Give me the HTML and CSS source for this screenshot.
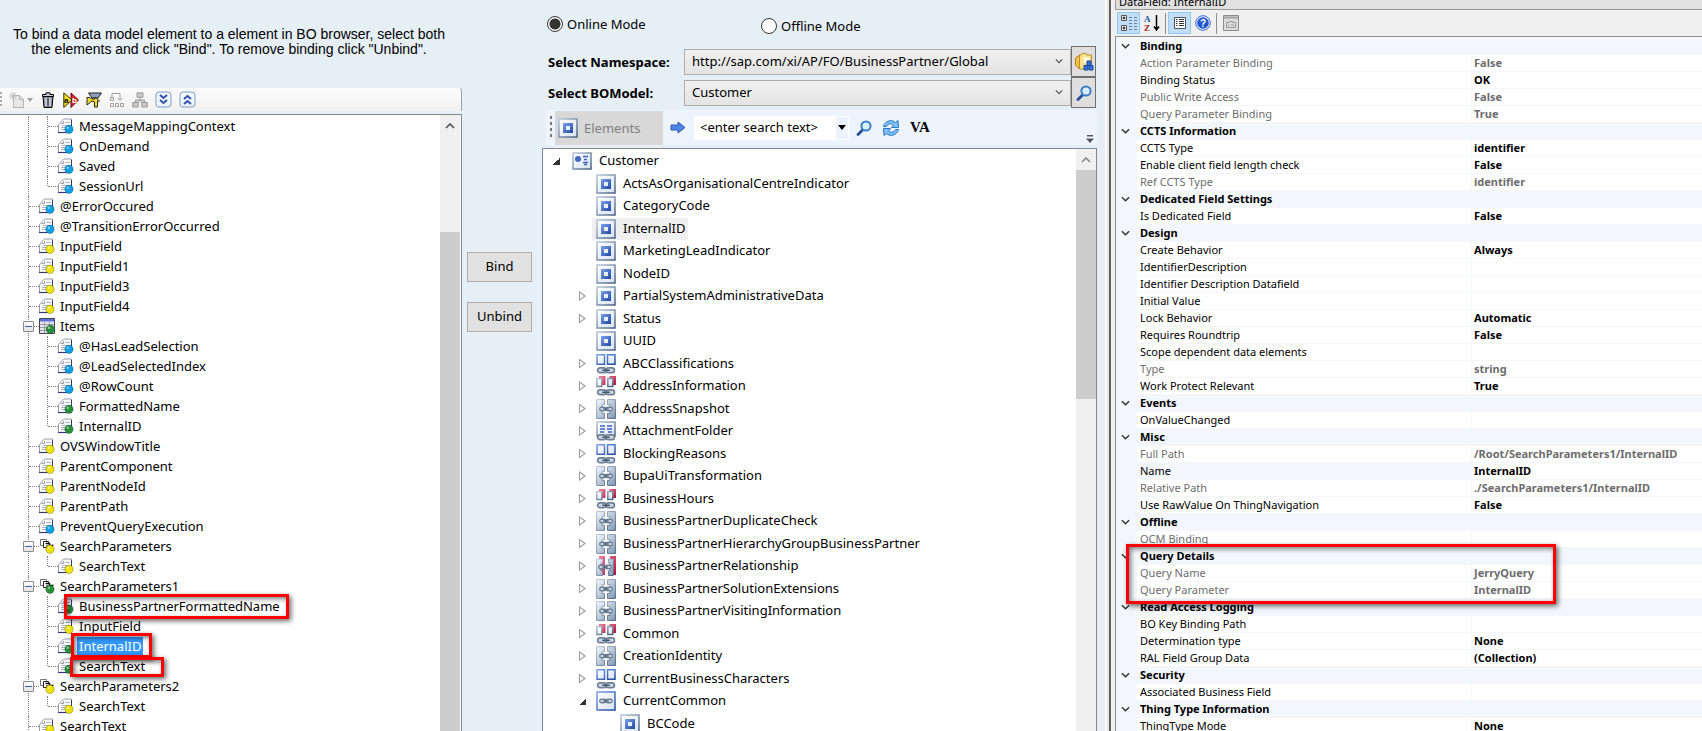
FILE: index.html
```html
<!DOCTYPE html>
<html lang="en">
<head>
<meta charset="utf-8">
<title>Data Binding</title>
<link rel="stylesheet" href="styles.css">
</head>
<body>
<svg class="defs" aria-hidden="true">
  <defs>
    <linearGradient id="g-steel" x1="0" y1="0" x2="1" y2="1"><stop offset="0" stop-color="#b9c8da"/><stop offset="1" stop-color="#47607f"/></linearGradient>
    <linearGradient id="g-paper" x1="0" y1="0" x2="1" y2="1"><stop offset="0" stop-color="#fff"/><stop offset="1" stop-color="#d6e2f2"/></linearGradient>
    <linearGradient id="g-metal" x1="0" y1="0" x2="1" y2="1"><stop offset="0" stop-color="#f4f8fc"/><stop offset="1" stop-color="#8299b5"/></linearGradient>
    <linearGradient id="g-blue" x1="0" y1="0" x2="1" y2="1"><stop offset="0" stop-color="#7aa2ec"/><stop offset="1" stop-color="#2147a0"/></linearGradient>
    <linearGradient id="g-red" x1="0" y1="0" x2="1" y2="1"><stop offset="0" stop-color="#f47a94"/><stop offset="1" stop-color="#b01238"/></linearGradient>
    <symbol id="doc" viewBox="0 0 16 16">
      <path d="M1.500 13V4.500L4.500 1.500H13.500V12H13" fill="#fff"/>
      <path d="M1 5v9h8V5z" fill="#fff"/>
      <path d="M.5 14V6.500L3 4.500V3.500L5.500 1H13.500" fill="none" stroke="#9a9ca6"/>
      <path d="M3 5.500h2.500V3" fill="none" stroke="#9a9ca6"/>
      <path d="M13.500 1.500v8" stroke="#343a78"/>
      <path d="M0 14.500h9" stroke="#343a78" stroke-width="1.200"/>
      <path d="M7 4.500h5M4 7.500h7M3 9.500h5M3 11.500h4" stroke="#a9b2c6"/>
      <circle cx="11" cy="11.300" r="4.200" fill="currentColor" stroke="#000" stroke-opacity=".3" stroke-width=".8"/>
      <circle cx="9.800" cy="9.800" r="1.200" fill="#fff" fill-opacity=".5"/>
    </symbol>
    <symbol id="struct" viewBox="0 0 16 16">
      <path d="M1.500 1.500h6v6h-6z" fill="#fff" stroke="#777"/>
      <path d="M4.500 3.500h5v6h-5z" fill="#fff" stroke="#222"/>
      <path d="M6.500 5.500h4v2h3l-3 4-3-4" fill="#fff" stroke="#111" stroke-width="1.500"/>
      <circle cx="11" cy="11.300" r="4.200" fill="currentColor" stroke="#000" stroke-opacity=".3" stroke-width=".8"/>
      <circle cx="9.800" cy="9.800" r="1.200" fill="#fff" fill-opacity=".5"/>
    </symbol>
    <symbol id="table" viewBox="0 0 16 16">
      <path d="M.5.5h15v15H.5z" fill="#e4e4ea" stroke="#44464f"/>
      <path d="M1 1h14v2.500H1z" fill="#5a72d6"/>
      <path d="M1 6.500h14M1 9.500h14M1 12.500h14M5.500 4v11M10.500 4v11" stroke="#9b9ba5"/>
      <circle cx="11.300" cy="11.300" r="4.200" fill="currentColor" stroke="#000" stroke-opacity=".3" stroke-width=".8"/>
      <circle cx="10" cy="9.800" r="1.200" fill="#fff" fill-opacity=".5"/>
    </symbol>
    <symbol id="field" viewBox="0 0 20 20">
      <path d="M1 1h18v18H1z" fill="url(#g-paper)" stroke="url(#g-steel)" stroke-width="1.500"/>
      <path d="M5 5h10v10H5z" fill="url(#g-blue)"/>
      <path d="M8 8h4v4H8z" fill="#e9f0fd"/>
    </symbol>
    <symbol id="chain" viewBox="0 0 20 8">
      <rect x="1" y="1.500" width="9" height="5" rx="2.500" fill="#cfd9e4" stroke="#6d8196" stroke-width="1.800"/>
      <rect x="10" y="1.500" width="9" height="5" rx="2.500" fill="#cfd9e4" stroke="#6d8196" stroke-width="1.800"/>
      <path d="M6 4h8" stroke="#43566b" stroke-width="1.800"/>
    </symbol>
    <symbol id="multi" viewBox="0 0 20 20">
      <path d="M1 .8h7.500v9.500H1zM11.500.8H19v9.500h-7.500z" fill="url(#g-paper)" stroke="url(#g-blue)" stroke-width="1.500"/>
      <use href="#chain" y="12.500" width="20" height="7.500"/>
    </symbol>
    <symbol id="multired" viewBox="0 0 20 20">
      <path d="M3 0h6.500v9H3zM13.500 0H20v9h-6.500z" fill="url(#g-red)"/>
      <path d="M.8 2.500h5v8h-5zM11.800 2.500h5v8h-5z" fill="url(#g-paper)" stroke="url(#g-steel)" stroke-width="1.500"/>
      <use href="#chain" y="12.500" width="20" height="7.500"/>
    </symbol>
    <symbol id="link" viewBox="0 0 20 20">
      <path d="M.6.6h7.900v5H6v8.800h2.500v5H.6zM19.400.6h-7.900v5H14v8.800h-2.500v5h7.900z" fill="url(#g-metal)" stroke="url(#g-steel)"/>
      <use href="#chain" x="3" y="7" width="14" height="6"/>
    </symbol>
    <symbol id="linkred" viewBox="0 0 20 20">
      <path d="M3 0h6v19H3zM14 0h6v19h-6z" fill="url(#g-red)"/>
      <path d="M.6 3h6v4H5v8h1.600v4.400h-6zM17.400 3h-5v4H14v8h-1.600v4.400h5z" fill="url(#g-metal)" stroke="url(#g-steel)"/>
      <use href="#chain" x="2" y="8" width="14" height="6"/>
    </symbol>
    <symbol id="folder" viewBox="0 0 20 20">
      <path d="M1 1h18v14H1z" fill="url(#g-paper)" stroke="url(#g-steel)" stroke-width="1.500"/>
      <path d="M4 5h5M11 5h5M4 8h5M11 8h5M4 11h4M12 11h4" stroke="#3d62c0" stroke-width="1.500"/>
      <use href="#chain" y="12.500" width="20" height="7.500"/>
    </symbol>
    <symbol id="linkbox" viewBox="0 0 20 20">
      <path d="M1 1h18v18H1z" fill="url(#g-paper)" stroke="url(#g-blue)" stroke-width="1.500"/>
      <use href="#chain" x="3" y="7" width="14" height="6"/>
    </symbol>
    <symbol id="bo" viewBox="0 0 20 18">
      <path d="M1 1h18v16H1z" fill="url(#g-paper)" stroke="url(#g-steel)" stroke-width="1.500"/>
      <circle cx="6" cy="7" r="3" fill="#3f69c4"/>
      <path d="M11 4.500h5M12 7.500h3M11 10.500h5M12 12.500h3" stroke="#3d62c0" stroke-width="1.500"/>
    </symbol>
    <symbol id="lens" viewBox="0 0 16 16">
      <path d="M6.500 10L2 14.500" stroke="#2c4b9a" stroke-width="2.800" stroke-linecap="round"/>
      <circle cx="10" cy="6" r="4.600" fill="#d8effc" stroke="#3a7fc8" stroke-width="2"/>
    </symbol>
    <symbol id="chev" viewBox="0 0 10 6"><path d="M1 1l4 4 4-4" fill="none" stroke="currentColor" stroke-width="1.600"/></symbol>
  </defs>
</svg>

<main class="app">
  <section class="model">
    <p class="hint">To bind a data model element to a element in BO browser, select both<br>the elements and click "Bind". To remove binding click "Unbind".</p>
    <div class="model-bar">
      <i class="grip"></i>
      <button class="tool new" aria-label="New"><svg width="16" height="16" viewBox="0 0 16 16"><path d="M4.500 3.500h6l4 4v8h-10z" fill="#e6e6e6" stroke="#b4b4b4"/><path d="M10.500 3.500v4h4" fill="none" stroke="#b4b4b4"/><path d="M4 0v8M0 4h8M1 1l6 6M7 1L1 7" stroke="#bdbdbd"/></svg><svg width="6" height="4" viewBox="0 0 6 4"><path d="M0 0h6L3 4z" fill="#a0a0a0"/></svg></button>
      <button class="tool" aria-label="Delete"><svg width="16" height="16" viewBox="0 0 16 16"><path d="M3 4.500h10l-1 11H4z" fill="#8792a6" stroke="#000"/><path d="M6 6v8M10 6v8" stroke="#fff"/><path d="M8 6v8" stroke="#333"/><path d="M2.500 4.500v-2h3.500V.8h4v1.700h3.500v2z" fill="#c2c9d6" stroke="#000"/></svg></button>
      <button class="tool" aria-label="Rename"><svg width="16" height="16" viewBox="0 0 16 16"><path d="M8 1l7.500 7L8 15.500z" fill="#e8262c" stroke="#5c0608"/><path d="M.8.8L9 8 .8 15.500z" fill="#f6e01c" stroke="#3b3300"/><text x="1" y="11" class="tiny">a</text><text x="9" y="11" class="tiny light">b</text></svg></button>
      <button class="tool" aria-label="Filter"><svg width="16" height="16" viewBox="0 0 16 16"><path d="M2.500 1h13L12 6H6z" fill="#8ea0bd" stroke="#222"/><path d="M1 13V5.500h3l1.500 1.500H9V5l4.500 4H11.500v6h-3V10L6 9z" fill="#f5dc2c" stroke="#222"/></svg></button>
      <button class="tool" aria-label="Move"><svg width="16" height="16" viewBox="0 0 16 16" fill="none" stroke="#a0a0a0"><path d="M1.500 5.500h3v3h-3zM1.500 11.500h3v3h-3zM6.500 11.500h3v3h-3zM11.500 11.500h3v3h-3zM3 5V1.500h8v6M8.500 6l2.500 2.500L13.500 6"/></svg></button>
      <button class="tool" aria-label="Hierarchy"><svg width="16" height="16" viewBox="0 0 16 16" fill="#c9c9c9" stroke="#9a9a9a"><path d="M5 .8h6v4.500H5zM.8 10.500h5.500v4.500H.8zM9.800 10.500h5.500v4.500H9.800zM8 5.500V8M3.500 10.500V8h9v2.500"/></svg></button>
      <button class="tool" aria-label="Expand all"><svg width="17" height="17" viewBox="0 0 17 17"><rect x="1" y="1" width="15" height="15" rx="3" fill="#eef5fc" stroke="#7f9fc4"/><path d="M5 4l3.500 3L12 4M5 9l3.500 3L12 9" fill="none" stroke="#3550ac" stroke-width="2"/></svg></button>
      <button class="tool" aria-label="Collapse all"><svg width="17" height="17" viewBox="0 0 17 17"><rect x="1" y="1" width="15" height="15" rx="3" fill="#eef5fc" stroke="#7f9fc4"/><path d="M5 8l3.500-3L12 8M5 13l3.500-3 3.500 3" fill="none" stroke="#3550ac" stroke-width="2"/></svg></button>
    </div>
    <div class="pane model-pane">
      <ul class="mtree">
        <li><ul>
          <li><div class="mrow"><svg class="blue"><use href="#doc"/></svg><span>MessageMappingContext</span></div></li>
          <li><div class="mrow"><svg class="blue"><use href="#doc"/></svg><span>OnDemand</span></div></li>
          <li><div class="mrow"><svg class="blue"><use href="#doc"/></svg><span>Saved</span></div></li>
          <li><div class="mrow"><svg class="blue"><use href="#doc"/></svg><span>SessionUrl</span></div></li>
        </ul></li>
        <li><div class="mrow"><svg class="blue"><use href="#doc"/></svg><span>@ErrorOccured</span></div></li>
        <li><div class="mrow"><svg class="blue"><use href="#doc"/></svg><span>@TransitionErrorOccurred</span></div></li>
        <li><div class="mrow"><svg class="yellow"><use href="#doc"/></svg><span>InputField</span></div></li>
        <li><div class="mrow"><svg class="yellow"><use href="#doc"/></svg><span>InputField1</span></div></li>
        <li><div class="mrow"><svg class="yellow"><use href="#doc"/></svg><span>InputField3</span></div></li>
        <li><div class="mrow"><svg class="yellow"><use href="#doc"/></svg><span>InputField4</span></div></li>
        <li><div class="mrow"><button class="fold" aria-label="Collapse Items"></button><svg class="green"><use href="#table"/></svg><span>Items</span></div>
          <ul>
            <li><div class="mrow"><svg class="blue"><use href="#doc"/></svg><span>@HasLeadSelection</span></div></li>
            <li><div class="mrow"><svg class="blue"><use href="#doc"/></svg><span>@LeadSelectedIndex</span></div></li>
            <li><div class="mrow"><svg class="blue"><use href="#doc"/></svg><span>@RowCount</span></div></li>
            <li><div class="mrow"><svg class="green"><use href="#doc"/></svg><span>FormattedName</span></div></li>
            <li><div class="mrow"><svg class="green"><use href="#doc"/></svg><span>InternalID</span></div></li>
          </ul></li>
        <li><div class="mrow"><svg class="yellow"><use href="#doc"/></svg><span>OVSWindowTitle</span></div></li>
        <li><div class="mrow"><svg class="yellow"><use href="#doc"/></svg><span>ParentComponent</span></div></li>
        <li><div class="mrow"><svg class="yellow"><use href="#doc"/></svg><span>ParentNodeId</span></div></li>
        <li><div class="mrow"><svg class="yellow"><use href="#doc"/></svg><span>ParentPath</span></div></li>
        <li><div class="mrow"><svg class="blue"><use href="#doc"/></svg><span>PreventQueryExecution</span></div></li>
        <li><div class="mrow"><button class="fold" aria-label="Collapse SearchParameters"></button><svg class="yellow"><use href="#struct"/></svg><span>SearchParameters</span></div>
          <ul><li><div class="mrow"><svg class="yellow"><use href="#doc"/></svg><span>SearchText</span></div></li></ul></li>
        <li><div class="mrow"><button class="fold" aria-label="Collapse SearchParameters1"></button><svg class="green"><use href="#struct"/></svg><span>SearchParameters1</span></div>
          <ul>
            <li><div class="mrow"><svg class="green"><use href="#doc"/></svg><span>BusinessPartnerFormattedName</span><i class="mark mark-name"></i></div></li>
            <li><div class="mrow"><svg class="yellow"><use href="#doc"/></svg><span>InputField</span></div></li>
            <li><div class="mrow"><svg class="green"><use href="#doc"/></svg><span class="selected">InternalID</span><i class="mark mark-id"></i></div></li>
            <li><div class="mrow"><svg class="green"><use href="#doc"/></svg><span>SearchText</span><i class="mark mark-text"></i></div></li>
          </ul></li>
        <li><div class="mrow"><button class="fold" aria-label="Collapse SearchParameters2"></button><svg class="yellow"><use href="#struct"/></svg><span>SearchParameters2</span></div>
          <ul><li><div class="mrow"><svg class="yellow"><use href="#doc"/></svg><span>SearchText</span></div></li></ul></li>
        <li><div class="mrow"><svg class="yellow"><use href="#doc"/></svg><span>SearchText</span></div></li>
      </ul>
      <div class="scroll scroll-model"><svg class="up"><use href="#chev"/></svg><i class="thumb"></i></div>
    </div>
  </section>

  <section class="actions">
    <button>Bind</button>
    <button>Unbind</button>
  </section>

  <section class="browser">
    <div class="modes">
      <label><input type="radio" name="mode" checked>Online Mode</label>
      <label><input type="radio" name="mode">Offline Mode</label>
    </div>
    <div class="fields">
      <label for="ns">Select Namespace:</label>
      <div class="combo"><select id="ns"><option>http://sap.com/xi/AP/FO/BusinessPartner/Global</option></select><svg><use href="#chev"/></svg></div>
      <button class="side" aria-label="Browse namespaces"><svg width="20" height="20" viewBox="0 0 20 20"><path d="M1.500 6l4-3v14l-4-4z" fill="#f2c24a" stroke="#b57d14"/><path d="M5.500 4l3-2.500h3.500l1 1.500h4.500v14h-12z" fill="#fbe08a" stroke="#c28a1c"/><path d="M9.500 5h6v6h-6z" fill="#fff7da"/><path d="M13 9h4v4.500h-4zM10 13.500h4V18h-4zM15 13.500h4V18h-4z" fill="#2f74e6" stroke="#1a489e"/></svg></button>
      <label for="bo-model">Select BOModel:</label>
      <div class="combo"><select id="bo-model"><option>Customer</option></select><svg><use href="#chev"/></svg></div>
      <button class="side" aria-label="Find model"><svg width="16" height="16"><use href="#lens"/></svg></button>
    </div>
    <div class="search-bar">
      <i class="grip"></i>
      <button class="elements" disabled><svg width="20" height="20"><use href="#field"/></svg>Elements</button>
      <svg class="arrow" width="16" height="13" viewBox="0 0 16 13"><path d="M1 4h7V1l7 5.500L8 12V9H1z" fill="#4f86e8" stroke="#2c56b4"/></svg>
      <div class="search"><input type="text" value="&lt;enter search text&gt;" aria-label="Search text"><button aria-label="Search history"><svg width="8" height="5" viewBox="0 0 8 5"><path d="M0 0h8L4 5z"/></svg></button></div>
      <button class="tool" aria-label="Search"><svg width="16" height="16"><use href="#lens"/></svg></button>
      <button class="tool" aria-label="Refresh"><svg width="18" height="18" viewBox="0 0 18 18"><path d="M1.500 7.500C3 1.500 10 0 13.500 3.500L16 1.500l.5 7H9.500l2-2.500C9.500 4 6 4.500 4.500 7.500z" fill="#7cc0f4" stroke="#2b78c4"/><path d="M16.500 10.500c-1.500 6-8.500 7.500-12 4L2 16.500l-.5-7h7l-2 2.500c2 2 5.500 1.500 7-1.500z" fill="#7cc0f4" stroke="#2b78c4"/></svg></button>
      <button class="tool va">VA</button>
      <svg class="more" width="8" height="8" viewBox="0 0 8 8"><path d="M1 0h6v1.500H1zM0 3.500h8L4 8z" fill="#555"/></svg>
    </div>
    <div class="pane bo-pane">
      <ul class="btree">
        <li class="root"><i class="open"></i><svg><use href="#bo"/></svg><span>Customer</span></li>
        <li><i></i><svg><use href="#field"/></svg><span>ActsAsOrganisationalCentreIndicator</span></li>
        <li><i></i><svg><use href="#field"/></svg><span>CategoryCode</span></li>
        <li class="current"><i></i><svg><use href="#field"/></svg><span>InternalID</span></li>
        <li><i></i><svg><use href="#field"/></svg><span>MarketingLeadIndicator</span></li>
        <li><i></i><svg><use href="#field"/></svg><span>NodeID</span></li>
        <li><i class="closed"></i><svg><use href="#field"/></svg><span>PartialSystemAdministrativeData</span></li>
        <li><i class="closed"></i><svg><use href="#field"/></svg><span>Status</span></li>
        <li><i></i><svg><use href="#field"/></svg><span>UUID</span></li>
        <li><i class="closed"></i><svg><use href="#multi"/></svg><span>ABCClassifications</span></li>
        <li><i class="closed"></i><svg><use href="#multired"/></svg><span>AddressInformation</span></li>
        <li><i class="closed"></i><svg><use href="#link"/></svg><span>AddressSnapshot</span></li>
        <li><i class="closed"></i><svg><use href="#folder"/></svg><span>AttachmentFolder</span></li>
        <li><i class="closed"></i><svg><use href="#multi"/></svg><span>BlockingReasons</span></li>
        <li><i class="closed"></i><svg><use href="#link"/></svg><span>BupaUiTransformation</span></li>
        <li><i class="closed"></i><svg><use href="#multired"/></svg><span>BusinessHours</span></li>
        <li><i class="closed"></i><svg><use href="#link"/></svg><span>BusinessPartnerDuplicateCheck</span></li>
        <li><i class="closed"></i><svg><use href="#link"/></svg><span>BusinessPartnerHierarchyGroupBusinessPartner</span></li>
        <li><i class="closed"></i><svg><use href="#linkred"/></svg><span>BusinessPartnerRelationship</span></li>
        <li><i class="closed"></i><svg><use href="#link"/></svg><span>BusinessPartnerSolutionExtensions</span></li>
        <li><i class="closed"></i><svg><use href="#link"/></svg><span>BusinessPartnerVisitingInformation</span></li>
        <li><i class="closed"></i><svg><use href="#multired"/></svg><span>Common</span></li>
        <li><i class="closed"></i><svg><use href="#link"/></svg><span>CreationIdentity</span></li>
        <li><i class="closed"></i><svg><use href="#multi"/></svg><span>CurrentBusinessCharacters</span></li>
        <li><i class="open"></i><svg><use href="#linkbox"/></svg><span>CurrentCommon</span></li>
        <li class="deep"><i></i><svg><use href="#field"/></svg><span>BCCode</span></li>
      </ul>
      <div class="scroll scroll-bo"><svg class="up"><use href="#chev"/></svg><i class="thumb"></i></div>
    </div>
  </section>

  <div class="splitter"></div>

  <section class="props">
    <div class="props-head"><span>DataField: InternalID</span></div>
    <div class="props-bar">
      <button class="on" aria-label="Categorized"><svg width="18" height="18" viewBox="0 0 18 18"><path d="M1.500 1.500h5v5h-5zM1.500 11.500h5v5h-5z" fill="#fff" stroke="#555"/><path d="M2.500 4h3M4 2.500v3M2.500 14h3M4 12.500v3" stroke="#000"/><path d="M9 3.500h3M14 3.500h3M9 6.500h3M14 6.500h3M9 9.500h3M14 9.500h3M9 12.500h3M14 12.500h3M9 15.500h3M14 15.500h3" stroke="#6a7f9c"/></svg></button>
      <button aria-label="Alphabetical"><svg width="16" height="18" viewBox="0 0 16 18"><text x="0" y="8" class="az a">A</text><text x="0" y="17" class="az z">Z</text><path d="M12.500 1v14M10 12.500l2.500 3.500 2.500-3.500" fill="none" stroke="#000" stroke-width="1.500"/></svg></button>
      <i class="sep"></i>
      <button class="on" aria-label="Properties"><svg width="14" height="14" viewBox="0 0 14 14"><path d="M1.500 1.500h11v11h-11z" fill="#fff" stroke="#4a5568"/><path d="M3 3.500h1.500M6 3.500h5M3 5.500h1.500M6 5.500h5M3 7.500h1.500M6 7.500h5M3 9.500h1.500M6 9.500h5" stroke="#333"/></svg></button>
      <button aria-label="Help"><svg width="16" height="16" viewBox="0 0 16 16"><circle cx="8" cy="8" r="7.300" fill="#e8f0fc" stroke="#3a68d0"/><circle cx="8" cy="8" r="5.800" fill="#2456d0"/><text x="5" y="12" class="qm">?</text></svg></button>
      <i class="sep"></i>
      <button aria-label="Property pages"><svg width="16" height="16" viewBox="0 0 16 16"><path d="M.5.5h15v15H.5z" fill="#dcdcdc" stroke="#8d8d8d"/><path d="M1 2.500h14" stroke="#a5a5a5" stroke-width="2"/><path d="M3.500 7.500h3v-1h3v1h3v5h-9zM5 10h1.500M8 10h3" fill="none" stroke="#9b9b9b"/></svg></button>
    </div>
    <div class="grid">
      <table>
        <colgroup><col class="c-gutter"><col class="c-name"><col></colgroup>
        <tbody>
          <tr class="cat"><td><svg><use href="#chev"/></svg></td><th colspan="2">Binding</th></tr>
          <tr class="ro"><td></td><th>Action Parameter Binding</th><td>False</td></tr>
          <tr><td></td><th>Binding Status</th><td>OK</td></tr>
          <tr class="ro"><td></td><th>Public Write Access</th><td>False</td></tr>
          <tr class="ro"><td></td><th>Query Parameter Binding</th><td>True</td></tr>
          <tr class="cat"><td><svg><use href="#chev"/></svg></td><th colspan="2">CCTS Information</th></tr>
          <tr><td></td><th>CCTS Type</th><td>identifier</td></tr>
          <tr><td></td><th>Enable client field length check</th><td>False</td></tr>
          <tr class="ro"><td></td><th>Ref CCTS Type</th><td>identifier</td></tr>
          <tr class="cat"><td><svg><use href="#chev"/></svg></td><th colspan="2">Dedicated Field Settings</th></tr>
          <tr><td></td><th>Is Dedicated Field</th><td>False</td></tr>
          <tr class="cat"><td><svg><use href="#chev"/></svg></td><th colspan="2">Design</th></tr>
          <tr><td></td><th>Create Behavior</th><td>Always</td></tr>
          <tr><td></td><th>IdentifierDescription</th><td></td></tr>
          <tr><td></td><th>Identifier Description Datafield</th><td></td></tr>
          <tr><td></td><th>Initial Value</th><td></td></tr>
          <tr><td></td><th>Lock Behavior</th><td>Automatic</td></tr>
          <tr><td></td><th>Requires Roundtrip</th><td>False</td></tr>
          <tr><td></td><th>Scope dependent data elements</th><td></td></tr>
          <tr class="ro"><td></td><th>Type</th><td>string</td></tr>
          <tr><td></td><th>Work Protect Relevant</th><td>True</td></tr>
          <tr class="cat"><td><svg><use href="#chev"/></svg></td><th colspan="2">Events</th></tr>
          <tr><td></td><th>OnValueChanged</th><td></td></tr>
          <tr class="cat"><td><svg><use href="#chev"/></svg></td><th colspan="2">Misc</th></tr>
          <tr class="ro"><td></td><th>Full Path</th><td>/Root/SearchParameters1/InternalID</td></tr>
          <tr class="active"><td></td><th>Name</th><td>InternalID</td></tr>
          <tr class="ro"><td></td><th>Relative Path</th><td>./SearchParameters1/InternalID</td></tr>
          <tr><td></td><th>Use RawValue On ThingNavigation</th><td>False</td></tr>
          <tr class="cat"><td><svg><use href="#chev"/></svg></td><th colspan="2">Offline</th></tr>
          <tr class="ro"><td></td><th>OCM Binding</th><td></td></tr>
          <tr class="cat"><td><svg><use href="#chev"/></svg><i class="mark mark-query"></i></td><th colspan="2">Query Details</th></tr>
          <tr class="ro"><td></td><th>Query Name</th><td>JerryQuery</td></tr>
          <tr class="ro"><td></td><th>Query Parameter</th><td>InternalID</td></tr>
          <tr class="cat"><td><svg><use href="#chev"/></svg></td><th colspan="2">Read Access Logging</th></tr>
          <tr><td></td><th>BO Key Binding Path</th><td></td></tr>
          <tr><td></td><th>Determination type</th><td>None</td></tr>
          <tr><td></td><th>RAL Field Group Data</th><td>(Collection)</td></tr>
          <tr class="cat"><td><svg><use href="#chev"/></svg></td><th colspan="2">Security</th></tr>
          <tr><td></td><th>Associated Business Field</th><td></td></tr>
          <tr class="cat"><td><svg><use href="#chev"/></svg></td><th colspan="2">Thing Type Information</th></tr>
          <tr><td></td><th>ThingType Mode</th><td>None</td></tr>
        </tbody>
      </table>
    </div>
  </section>
</main>
</body>
</html>
```

FILE: styles.css
```css
* { box-sizing: border-box; }
body { margin: 0; font-family: "Noto Sans", sans-serif; font-size: 13px; color: #000; background: #e6eef6; }
ul { list-style: none; margin: 0; padding: 0; }
button, input, select { font: inherit; color: inherit; margin: 0; }
.defs { position: absolute; width: 0; height: 0; }

.app {
  display: grid;
  grid-template-columns: minmax(0, 462fr) 80px minmax(0, 563fr) 10px minmax(0, 587fr);
  height: 100vh;
  overflow: hidden;
}
.app > section { display: flex; flex-direction: column; min-height: 0; min-width: 0; }
.pane { display: flex; flex: 1; min-height: 0; overflow: hidden; background: #fff; border: 1px solid #828790; border-bottom: 0; }
.pane > ul { flex: 1; min-width: 0; }
.tool { display: flex; align-items: center; justify-content: center; padding: 0; border: 0; background: none; }

.scroll { display: flex; flex-direction: column; align-items: center; background: #f0f0f0; }
.scroll .up { width: 10px; height: 6px; flex: none; transform: rotate(180deg); color: #505050; }
.thumb { width: 100%; background: #cdcdcd; }

/* data model tree */
.hint { margin: 0; padding: 27px 10px 0 6px; height: 88px; font: 14px/15px "Liberation Sans", sans-serif; text-align: center; white-space: nowrap; }
.model-bar { display: flex; align-items: center; gap: 7px; height: 23px; margin-bottom: 3px; background: linear-gradient(#fcfcfc, #f1f1f1); border-right: 1px solid #9aa0a8; border-radius: 0 3px 0 0; }
.grip { width: 2px; height: 16px; background: repeating-linear-gradient(#aaa 0 2px, transparent 2px 4px); }
.model-bar .new { gap: 2px; }
.tiny { font: bold 8px "Liberation Sans", sans-serif; }
.light { fill: #fff; }
.model-pane { border-left: 0; }
.mtree { padding-top: 1px; }
.mtree li { position: relative; }
.mtree li::before { content: ""; position: absolute; left: 28px; top: 0; bottom: 0; border-left: 1px dotted #808080; }
.mtree ul { padding-left: 19px; }
.mtree ul li:last-child::before { bottom: 10px; }
.mrow { position: relative; display: flex; align-items: center; height: 20px; line-height: 19px; padding-left: 29px; }
.mrow::before { content: ""; width: 10px; border-top: 1px dotted #808080; }
.mrow svg { width: 16px; height: 16px; flex: none; }
.mrow span { padding: 0 2px; margin-left: 3px; white-space: nowrap; }
.mrow .selected { background: #3399ff; color: #fff; }
.blue { color: #0a9fe6; }
.yellow { color: #efe200; }
.green { color: #26913a; }
.fold { position: absolute; left: 23px; top: 5px; width: 11px; height: 11px; padding: 0; border: 1px solid #8c8c8c; border-radius: 1px; background: linear-gradient(#3c5fae, #3c5fae) center / 7px 1px no-repeat, linear-gradient(#fff, #e2e2e2); }
.scroll-model { width: 20px; margin-right: 1px; padding-top: 8px; gap: 103px; }
.scroll-model .thumb { flex: 1; }

.mark { position: absolute; z-index: 2; border: 3px solid #fe0000; box-shadow: 2px 2px 5px rgba(0, 0, 0, .6), inset 2px 2px 5px rgba(0, 0, 0, .5); pointer-events: none; }
.mark-name { left: 45px; top: -2px; width: 225px; height: 25px; }
.mark-id { left: 52px; top: -3px; width: 81px; height: 25px; }
.mark-text { left: 51px; top: 1px; width: 94px; height: 20px; }

/* bind buttons */
.actions { padding: 252px 10px 0 5px; gap: 20px; }
.actions button { height: 30px; padding: 0 0 2px; border: 1px solid #adadad; background: #e1e1e1; }

/* business object browser */
.browser { padding-right: 8px; }
.modes { display: flex; padding: 14px 0 0 5px; height: 46px; }
.modes label { display: flex; align-items: center; gap: 4px; height: 20px; }
.modes label:first-child { width: 214px; }
.modes label:last-child { height: 24px; }
.modes input { appearance: none; width: 16px; height: 16px; border: 1px solid #333; border-radius: 50%; background: #fff; }
.modes input:checked { background: radial-gradient(circle, #333 5px, #fff 6px); }
.fields { display: grid; grid-template-columns: 136px 1fr 25px; grid-auto-rows: 31px; align-items: center; padding: 0 1px 0 6px; margin-bottom: 2px; }
.fields label { font-weight: bold; }
.combo { position: relative; }
.combo select { appearance: none; display: block; width: 100%; height: 26px; padding: 0 24px 1px 7px; border: 1px solid #adadad; border-radius: 0; background: linear-gradient(#f0f0f0, #e4e4e4); }
.combo svg { position: absolute; right: 8px; top: 9px; width: 8px; height: 6px; color: #555; }
.side { display: flex; align-items: center; justify-content: center; height: 31px; padding: 0; border: 1px solid #707070; background: #dedede; }
.search-bar { display: flex; align-items: center; height: 35px; margin: 0 0 3px 4px; padding-left: 4px; border-radius: 3px; background: #eef4fd; }
.search-bar .grip { height: 24px; margin-right: 3px; background: repeating-linear-gradient(#777 0 3px, transparent 3px 6px); }
.elements { display: flex; align-items: center; gap: 6px; width: 108px; height: 34px; padding: 0 3px; border: 0; background: #d8d8d8; color: #808080; }
.arrow { margin: 0 8px 0 7px; }
.search { display: flex; width: 155px; height: 24px; margin-right: 7px; background: #fff; }
.search input { flex: 1; min-width: 0; padding: 0 6px 2px; border: 0; background: none; }
.search button { width: 14px; padding: 0; border: 1px solid #fff; background: #eef4fd; }
.search button svg { display: block; margin: auto; }
.search-bar .tool + .tool { margin-left: 10px; }
.va { font: bold 15px "Liberation Serif", serif; }
.more { margin-left: auto; margin-right: 3px; align-self: flex-end; margin-bottom: 2px; }
.btree { padding-top: 1px; }
.btree li { display: flex; align-items: center; height: 22px; padding-left: 36px; line-height: 20px; }
.btree li:nth-child(even) { height: 23px; }
.btree .root { padding-left: 10px; }
.btree .deep { padding-left: 60px; }
.btree i { width: 7px; margin-right: 6px; }
.btree svg { width: 24px; height: 20px; padding: 0 0 0 4px; flex: none; }
.btree .root i { margin-right: 8px; }
.btree span { padding: 0 3px 2px 7px; white-space: nowrap; }
.btree .current svg, .btree .current span { height: 22px; background: #f0f0f0; }
.btree .open { height: 7px; background: linear-gradient(135deg, transparent 50%, #333 50%); }
.btree .closed { height: 10px; background: #9a9a9a; clip-path: polygon(0 0, 100% 50%, 0 100%, 0 0, 1px 2px, 1px 8px, 5px 5px, 1px 2px); }
.scroll-bo { width: 20px; padding-top: 8px; gap: 7px; }
.scroll-bo .up { color: #8a8a8a; }
.scroll-bo .thumb { height: 229px; }

.splitter { background: linear-gradient(90deg, #fafafa 2px, #e6e6e6 2px 4px, #5f5f5f 4px 6px, #f0f0f0 6px); }

/* property grid */
.props { background: #f0f0f0; font-size: 11px; }
.props-head { display: flex; align-items: flex-end; height: 10px; overflow: hidden; padding-left: 3px; border: 1px solid #999; border-top: 0; border-right: 0; background: #e1e1e1; line-height: 15px; }
.props-bar { display: flex; align-items: center; height: 26px; padding-left: 2px; }
.props-bar button { display: flex; align-items: center; justify-content: center; width: 23px; height: 22px; padding: 0; border: 1px solid transparent; background: none; }
.props-bar .on { border-color: #90c8f6; background: #c2def5; }
.sep { width: 1px; height: 21px; margin: 0 2px; background: #8d8d8d; }
.az { font: bold 9px "Liberation Serif", serif; }
.a { fill: #1f4fa8; }
.z { fill: #a32020; }
.qm { font: bold 10px "Liberation Sans", sans-serif; fill: #fff; }
.grid { flex: 1; min-height: 0; overflow: hidden; padding-top: 1px; border: 1px solid #8f8f8f; border-width: 1px 0 0 1px; background: #f3f6fb; }
table { width: 100%; table-layout: fixed; border-collapse: separate; border-spacing: 0; background: #fff; }
.c-gutter { width: 21px; }
.c-name { width: 57%; }
tr { height: 17px; }
th, td { height: 17px; padding: 0 0 0 3px; line-height: 16px; text-align: left; white-space: nowrap; border-bottom: 1px solid #f3f6fb; }
th { font-weight: normal; }
td { padding-left: 2px; font-weight: bold; border-left: 1px solid #f3f6fb; }
td:first-child { position: relative; padding: 0; border-left: 0; background: #f3f6fb; }
td svg { display: block; width: 9px; height: 6px; margin-left: 5px; color: #333; }
.ro th, .ro td { color: #6d6d6d; }
.cat th { font-weight: bold; background: #f3f6fb; }
.active th { background: #f3f6fb; }
.mark-query { left: 10px; top: -4px; width: 430px; height: 60px; }
```
